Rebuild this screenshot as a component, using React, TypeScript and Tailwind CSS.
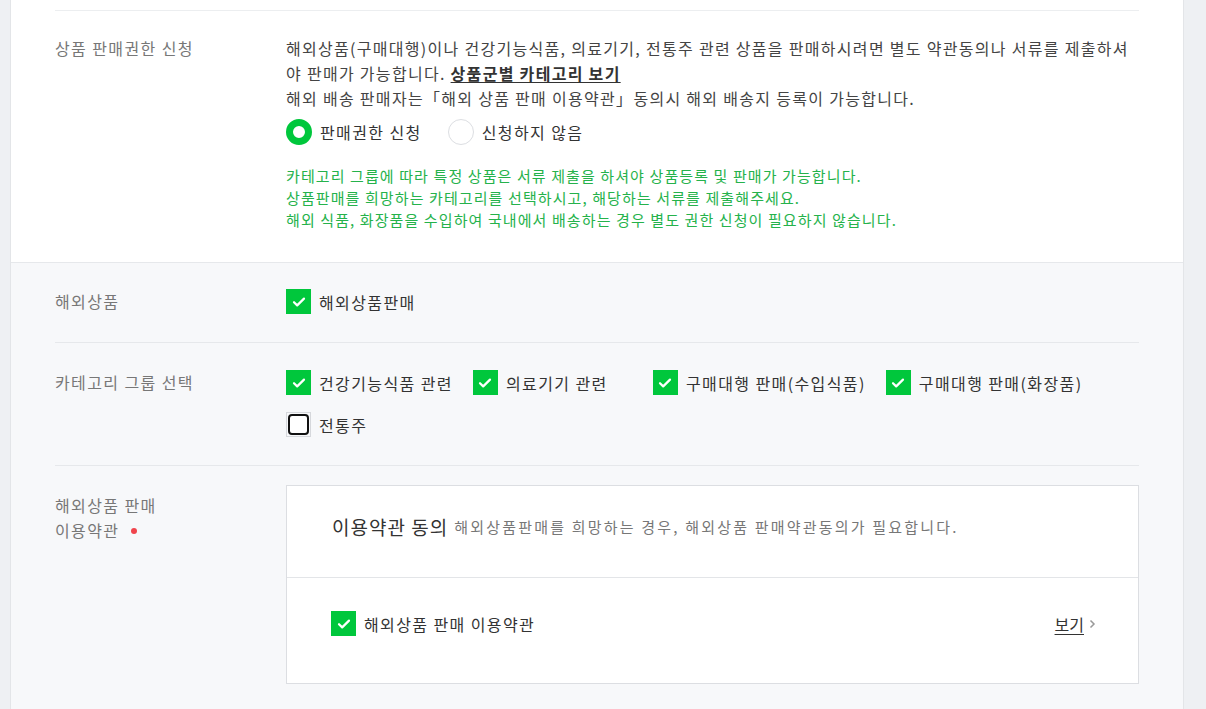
import React from 'react';

const font = { fontFamily: '"Noto Sans CJK KR", "Noto Sans", sans-serif' };

function CheckBox({ checked, focused }: { checked: boolean; focused?: boolean }) {
  if (checked) {
    return (
      <span className="flex h-[25px] w-[25px] shrink-0 items-center justify-center bg-[#00c73c]">
        <svg width="16" height="16" viewBox="0 0 16 16" fill="none">
          <path d="M3 8.2l3.2 3.2L13 4.6" stroke="#fff" strokeWidth="2.2" strokeLinecap="round" strokeLinejoin="round" />
        </svg>
      </span>
    );
  }
  return (
    <span className={`flex h-[25px] w-[25px] shrink-0 items-center justify-center ${focused ? 'border border-[#d6d8dc]' : ''}`}>
      <span className="h-[21px] w-[21px] rounded-[4px] border-2 border-[#111] bg-white" />
    </span>
  );
}

function CheckItem({ label, checked, focused }: { label: string; checked: boolean; focused?: boolean }) {
  return (
    <label className="mr-5 flex min-w-[160px] items-center gap-2 text-[16px] tracking-[1.4px] text-[#333]">
      <CheckBox checked={checked} focused={focused} />
      <span>{label}</span>
    </label>
  );
}

export default function App() {
  return (
    <div className="min-h-screen bg-[#eef0f3] pl-[10px] pr-[22px]" style={font}>
      <div className="min-h-[709px] border-x border-[#e3e5e8] bg-[#f7f8fa]">
        {/* 판매권한 영역 */}
        <div className="border-b border-[#e6e8eb] bg-white px-[44px]">
          <div className="h-[11px] border-b border-[#eceef0]" />
          <div className="flex pt-[25px] pb-[31px]">
            <div className="w-[231px] shrink-0 text-[16px] leading-[25px] tracking-[1.4px] text-[#777]">
              상품 판매권한 신청
            </div>
            <div className="flex-1">
              <p className="text-[16px] leading-[25px] tracking-[1.3px] text-[#444]">
                해외상품(구매대행)이나 건강기능식품, 의료기기, 전통주 관련 상품을 판매하시려면 별도 약관동의나 서류를 제출하셔야 판매가 가능합니다.{' '}
                <a className="font-bold text-[#333] underline underline-offset-2">상품군별 카테고리 보기</a>
                <br />
                해외 배송 판매자는「해외 상품 판매 이용약관」동의시 해외 배송지 등록이 가능합니다.
              </p>
              <div className="mt-[8px] flex items-center">
                <label className="mr-[26px] flex items-center gap-[8px] text-[16px] tracking-[1.4px] text-[#333]">
                  <span className="h-[26px] w-[26px] rounded-full border-[7px] border-[#00c73c] bg-white" />
                  판매권한 신청
                </label>
                <label className="flex items-center gap-[8px] text-[16px] tracking-[1.4px] text-[#333]">
                  <span className="h-[26px] w-[26px] rounded-full border border-[#dcdee2] bg-white" />
                  신청하지 않음
                </label>
              </div>
              <div className="mt-[20px] text-[15px] leading-[22px] tracking-[1.1px] text-[#25b24b]">
                <p>카테고리 그룹에 따라 특정 상품은 서류 제출을 하셔야 상품등록 및 판매가 가능합니다.</p>
                <p>상품판매를 희망하는 카테고리를 선택하시고, 해당하는 서류를 제출해주세요.</p>
                <p>해외 식품, 화장품을 수입하여 국내에서 배송하는 경우 별도 권한 신청이 필요하지 않습니다.</p>
              </div>
            </div>
          </div>
        </div>

        {/* 해외상품 영역 */}
        <div className="px-[44px]">
          <div className="flex border-b border-[#e6e8eb] pt-[26px] pb-[28px]">
            <div className="w-[231px] shrink-0 text-[16px] leading-[25px] tracking-[1.4px] text-[#777]">해외상품</div>
            <div className="flex flex-1">
              <CheckItem label="해외상품판매" checked />
            </div>
          </div>

          <div className="flex border-b border-[#e6e8eb] pt-[27px] pb-[28px]">
            <div className="w-[231px] shrink-0 text-[16px] leading-[25px] tracking-[1.4px] text-[#777]">카테고리 그룹 선택</div>
            <div className="flex flex-1 flex-wrap gap-y-[17px]">
              <CheckItem label="건강기능식품 관련" checked />
              <CheckItem label="의료기기 관련" checked />
              <CheckItem label="구매대행 판매(수입식품)" checked />
              <CheckItem label="구매대행 판매(화장품)" checked />
              <CheckItem label="전통주" checked={false} focused />
            </div>
          </div>

          <div className="flex pt-[19px] pb-[24px]">
            <div className="w-[231px] shrink-0 pt-[8px] text-[16px] leading-[25px] tracking-[1.4px] text-[#777]">
              <p>해외상품 판매</p>
              <p className="flex items-center">
                이용약관
                <span className="ml-[12px] h-[6px] w-[6px] rounded-full bg-[#f0444c]" />
              </p>
            </div>
            <div className="flex-1 border border-[#dcdee2] bg-white">
              <div className="flex h-[92px] items-center border-b border-[#e3e5e8] px-[45px] pb-[8px]">
                <span className="text-[19px] tracking-[1px] text-[#333]">이용약관 동의</span>
                <span className="ml-[6px] text-[15px] tracking-[2.2px] text-[#777]">
                  해외상품판매를 희망하는 경우, 해외상품 판매약관동의가 필요합니다.
                </span>
              </div>
              <div className="flex h-[105px] items-center justify-between pl-[44px] pr-[42px] pb-[14px]">
                <label className="flex items-center gap-[8px] text-[16px] tracking-[1.4px] text-[#333]">
                  <CheckBox checked />
                  해외상품 판매 이용약관
                </label>
                <a className="flex items-center gap-[4px] text-[16px] text-[#333]">
                  <span className="underline underline-offset-[3px]">보기</span>
                  <svg width="8" height="10" viewBox="0 0 8 10" fill="none">
                    <path d="M2.5 1.5L6 5 2.5 8.5" stroke="#999" strokeWidth="1.5" />
                  </svg>
                </a>
              </div>
            </div>
          </div>
        </div>
      </div>
    </div>
  );
}
